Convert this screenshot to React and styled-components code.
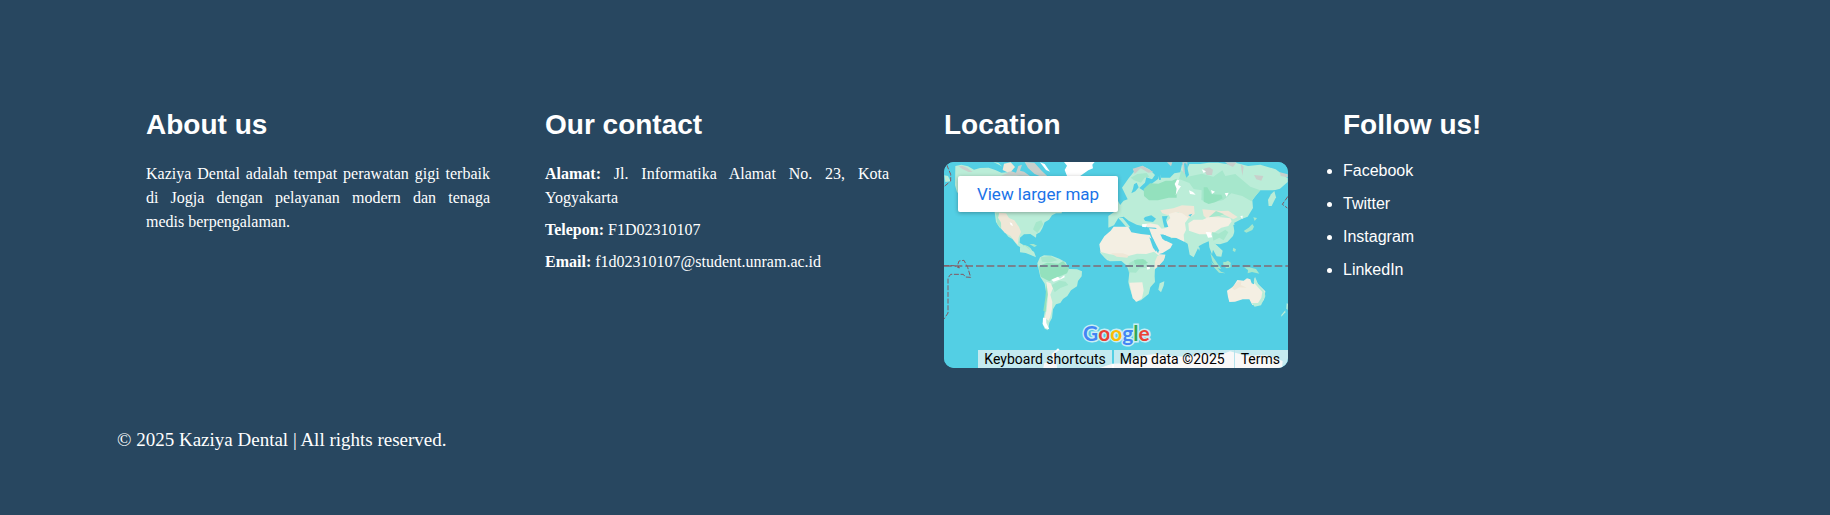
import React from "react";
import styled, { createGlobalStyle } from "styled-components";

const GlobalStyle = createGlobalStyle`
  *, *::before, *::after { box-sizing: border-box; }
  body { margin: 0; background: #284760; color: #fff; }
  h2, p, ul { margin: 0; padding: 0; }
`;

const Footer = styled.footer`
  min-height: 100vh;
  padding: 109px 117px 57px;
  background: #284760;
`;

const Columns = styled.div`
  display: grid;
  grid-template-columns: repeat(4, minmax(0, 1fr));
`;

const Column = styled.section`
  padding: 0 26px 0 29px;
`;

const Heading = styled.h2`
  margin-bottom: 21px;
  font: bold 28px/32px "Liberation Sans", Arial, sans-serif;
`;

const Text = styled.p`
  margin-bottom: 8px;
  font: 16px/24px "Liberation Serif", "Times New Roman", serif;
  text-align: justify;
`;

const LinkList = styled.ul`
  display: grid;
  gap: 15px;
  font: 16px/18px "Liberation Sans", Arial, sans-serif;
`;

const SocialLink = styled.a`
  color: #fff;
  text-decoration: none;
`;

const Copyright = styled.p`
  margin-top: 60px;
  font: 19px/24px "Liberation Serif", "Times New Roman", serif;
`;

const MapFrame = styled.div`
  position: relative;
  height: 206px;
  overflow: hidden;
  border-radius: 10px;
  background: #53cfe4;
  font-family: Roboto, sans-serif;
`;

const MapDrawing = styled.svg`
  display: block;
  width: 100%;
  height: 100%;
`;

const LargerMapLink = styled.a`
  position: absolute;
  top: 14px;
  left: 14px;
  width: 160px;
  border-radius: 2px;
  background: #fff;
  box-shadow: 0 1px 4px rgba(0, 0, 0, 0.3);
  color: #1a73e8;
  font-size: 17px;
  line-height: 36px;
  text-align: center;
  text-decoration: none;
`;

const MapLogo = styled.a`
  position: absolute;
  left: 139px;
  bottom: 22px;
  font: bold 21px/26px Lato, sans-serif;
  text-decoration: none;
  -webkit-text-stroke: 3px #c9eef5;
  paint-order: stroke fill;
`;

const Letter = styled.span`
  color: ${({ $color }) => $color};
`;

const Attribution = styled.div`
  position: absolute;
  right: 0;
  bottom: 0;
  display: flex;
`;

const attributionItem = `
  padding: 0 6px;
  border: 0;
  background: rgba(245, 245, 245, 0.7);
  color: #000;
  font: 14px/18px Roboto, sans-serif;
  text-decoration: none;
  white-space: nowrap;
`;

const ShortcutsButton = styled.button`
  ${attributionItem}
  margin-right: 2px;
`;

const MapData = styled.span`
  ${attributionItem}
  padding-right: 9px;
`;

const TermsLink = styled.a`
  ${attributionItem}
  padding-right: 8px;
  border-left: 1px solid #b5e3ec;
`;

const C = {
  land: "#bbedd8",
  green: "#a6e7cc",
  forest: "#93e1bd",
  sand: "#f4efe3",
  tan: "#efe7d7",
  rock: "#c9cfcb",
  ice: "#ffffff",
  sea: "#53cfe4",
};

const NORTH_AMERICA = [
  ["land", "M76 48 94 44 114 49 132 59 150 54 176 53 196 60 214 68 240 66 262 76 280 80 302 82 320 96 340 112 356 122 380 150 398 170 395 190 378 190 366 196 357 209 344 217 337 235 330 247 319 253 318 263 301 252 282 253 270 263 269 278 279 284 292 288 301 294 310 307 316 318 307 316 294 304 279 296 263 287 247 267 235 260 222 244 208 232 198 216 194 186 170 150 130 110 94 100 82 130 75 106Z"],
  ["rock", "M86 49 96 47 111 53 128 66 116 66 96 56Z"],
  ["rock", "M214 77 230 70 240 62 258 68 265 48 276 44 270 62 282 65 300 78Z"],
  ["rock", "M284 36 313 38 335 62 354 80 334 80 314 72 294 54Z"],
  ["ice", "M330 37 344 42 360 65 348 60Z"],
  ["land", "M190 36 206 39 217 50 208 45Z"],
  ["tan", "M222 41 242 37 255 51 244 64 232 67 218 60Z"],
  ["ice", "M402 36 494 36 487 44 489 55 475 61 459 72 443 83 412 80 404 60 411 47Z"],
  ["tan", "M207 188 228 190 237 204 253 211 267 231 273 246 266 262 263 284 253 272 241 257 224 248 214 236 213 217 204 203Z"],
  ["green", "M198 190 207 190 204 204 213 220 213 235 202 222Z"],
  ["green", "M279 285 294 289 302 300 314 318 299 305 280 296Z"],
  ["green", "M318 217 334 211 340 223 322 249 309 238Z"],
  ["ice", "M239 217 246 220 249 228 242 225Z"],
  ["land", "M348 192 370 186 367 194 353 198Z"],
  ["green", "M298 282 311 282 321 287 313 291Z"],
  ["land", "M43 76 54 78 62 94 46 96Z"],
];

const EURASIA = [
  ["land", "M36 113 56 85 76 60 97 47 118 58 135 75 126 88 109 82 105 98 88 114 101 122 129 98 145 86 149 70 153 83 180 83 193 70 211 67 216 43 230 60 238 42 270 42 296 38 324 38 354 43 376 38 414 48 451 44 497 58 533 85 533 96 510 116 496 120 488 121 451 121 437 137 427 151 429 174 413 200 395 207 372 219 378 231 369 258 352 276 330 283 317 282 296 274 279 281 267 288 251 322 239 314 233 281 216 271 200 262 184 265 174 253 150 248 143 236 126 226 100 229 80 224 56 212 41 200 25 204 12 226 -5 233 -5 198 22 179 32 163 41 152 53 148Z"],
  ["rock", "M68 56 97 47 130 66 115 68 92 55 74 72Z"],
  ["rock", "M217 37 232 37 231 80 220 79Z"],
  ["rock", "M281 56 298 52 309 59 306 75 290 75Z"],
  ["rock", "M345 37 380 37 369 51 356 45Z"],
  ["rock", "M392 42 401 50 397 77Z"],
  ["rock", "M432 75 460 78 454 92 439 88Z"],
  ["rock", "M510 67 533 73 533 82 512 78Z"],
  ["rock", "M171 37 187 37 183 49Z"],
  ["green", "M62 83 82 72 110 69 118 80 104 83 93 98 72 91Z"],
  ["green", "M214 60 233 80 276 71 310 80 337 61 346 78 376 72 421 110 451 121 437 137 424 154 397 138 364 130 340 150 299 159 274 150 275 121 251 117 238 99 207 87Z"],
  ["forest", "M101 117 120 100 145 101 167 92 186 92 200 86 200 143 176 143 144 151 117 151 102 138Z"],
  ["forest", "M281 112 292 112 304 133 334 134 338 145 315 157 296 162 281 155Z"],
  ["tan", "M151 181 190 175 216 166 252 168 254 192 237 204 220 202 205 187 172 195 157 190Z"],
  ["sand", "M97 223 121 220 144 224 155 236 171 233 165 221 181 204 175 192 197 186 217 190 236 204 225 219 228 240 221 254 223 275 199 264 181 262 153 251 137 233 113 232 100 228Z"],
  ["tan", "M277 178 310 181 333 183 355 182 368 191 383 201 370 208 343 194 318 203 291 206 281 197Z"],
  ["sand", "M235 220 251 209 278 209 296 201 333 202 361 205 365 214 355 228 334 233 315 246 301 253 268 253 237 242Z"],
  ["green", "M306 246 326 251 346 239 355 247 341 271 328 263 310 272Z"],
  ["green", "M296 202 318 183 343 193 330 198Z"],
  ["sand", "M117 235 148 238 169 273 188 282 181 295 158 309 145 313 136 286Z"],
  ["sea", "M118 261 128 263 147 301 143 314 131 296Z"],
  ["sea", "M151 253 166 256 177 268 166 273 157 266Z"],
  ["sea", "M156 199 173 198 168 211 175 231 163 232 159 215Z"],
  ["sea", "M105 201 124 196 138 206 129 216 106 213 101 206Z"],
  ["sea", "M222 40 229 40 237 75 229 83 225 70Z"],
  ["sea", "M72 103 80 98 86 112 76 124 64 130 69 116Z"],
  ["sea", "M147 69 151 69 153 89 147 90Z"],
  ["sea", "M370 225 382 220 390 239 374 248Z"],
  ["sea", "M235 195 247 191 241 200Z"],
  ["ice", "M201 89 208 91 204 105 213 109 205 120 197 136 200 116 194 102Z"],
  ["ice", "M275 58 288 64 281 69Z"],
  ["ice", "M303 120 315 125 306 132Z"],
  ["ice", "M344 130 356 128 350 140Z"],
  ["ice", "M237 121 249 126 257 134 240 132Z"],
  ["ice", "M287 246 302 247 307 262 294 263Z"],
  ["ice", "M391 198 398 197 397 208Z"],
  ["ice", "M97 222 111 223 107 232 96 230Z"],
  ["land", "M25 204 38 204 50 218 61 232 48 230 36 216Z"],
  ["land", "M296 270 311 277 326 291 338 302 334 320 320 319 309 299 306 313 298 292Z"],
  ["land", "M474 149 483 133 493 123 498 142 485 168 476 168Z"],
  ["green", "M401 243 416 233 427 222 432 230 427 240 409 248Z"],
  ["green", "M430 202 441 204 434 213Z"],
  ["green", "M340 339 354 332 363 339 354 354 343 349Z"],
  ["green", "M301 309 323 341 334 357 319 354 307 334Z"],
  ["green", "M370 293 378 298 375 306 368 302Z"],
  ["land", "M261 289 269 293 268 302Z"],
  ["land", "M5 154 18 142 27 158 36 175 17 180Z"],
];

const SOUTH = [
  ["land", "M52 100 60 82 72 76 95 77 118 86 137 97 147 117 171 118 186 124 185 139 174 153 171 169 153 181 142 198 129 207 121 219 108 223 99 238 96 264 88 278 84 301 74 296 68 282 75 240 79 191 74 161 61 141Z"],
  ["green", "M62 82 92 78 112 91 91 97 66 95Z"],
  ["forest", "M56 108 81 98 115 101 130 93 147 116 141 130 120 139 103 145 88 154 62 140Z"],
  ["forest", "M80 161 86 178 79 220 77 246 70 242 76 204Z"],
  ["sand", "M79 155 92 160 99 174 91 194 97 216 96 237 91 260 86 272 74 264 80 241 84 195Z"],
  ["green", "M95 165 119 152 137 155 145 165 121 174 104 187Z"],
  ["ice", "M94 149 114 140 120 146 133 136 134 142 122 148 101 155Z"],
  ["ice", "M69 263 78 264 79 279 88 298 76 295 68 282Z"],
  ["sand", "M238 43 253 19 272 2 281 -10 325 -10 334 7 363 12 390 15 398 37 412 67 418 73 436 74 431 91 412 112 385 113 354 111 316 90 262 91 242 70Z"],
  ["land", "M239 65 269 73 293 76 325 78 351 71 379 72 402 65 417 77 434 76 420 93 405 113 404 139 405 156 391 172 386 192 363 211 347 215 336 196 329 174 325 156 328 126 319 106 304 93 269 94 255 84Z"],
  ["tan", "M273 70 308 70 326 76 322 83 290 80Z"],
  ["green", "M326 100 352 86 377 89 384 113 359 115 348 128 326 127Z"],
  ["forest", "M342 91 369 87 384 98 366 106 345 103Z"],
  ["sand", "M328 158 367 157 371 181 366 205 350 215 338 205 333 181Z"],
  ["tan", "M412 78 436 74 432 89 414 109 403 119 405 94Z"],
  ["ice", "M379 107 388 105 390 116 382 119Z"],
  ["sea", "M388 22 397 28 412 57 408 65 399 53Z"],
  ["land", "M419 160 433 154 431 167 423 187 415 179Z"],
  ["land", "M0 52 15 47 31 61 42 65 48 82 34 76 17 69 0 67Z"],
];

const AUSTRALIA = [
  ["sand", "M351 92 369 80 382 60 401 62 411 55 421 58 425 70 432 73 434 53 443 71 466 94 462 119 450 133 427 135 418 118 398 118 375 125 358 126 354 111Z"],
  ["land", "M431 67 435 50 444 72 464 95 466 109 453 136 434 140 425 129 444 129 454 113 457 96 444 82Z"],
  ["tan", "M383 65 394 64 393 75 410 83 388 82 374 90 365 83Z"],
  ["green", "M402 22 418 22 438 27 448 41 426 36 413 40 414 30Z"],
  ["green", "M340 5 361 10 362 22 350 25 341 18Z"],
  ["green", "M303 5 323 25 333 35 347 40 327 38 312 22Z"],
  ["land", "M514 165 526 151 526 157 514 170Z"],
  ["land", "M530 130 534 131 533 150 529 146Z"],
];

const ANTARCTICA = [
  ["ice", "M365 282 384 265 389 270 376 278 379 294 381 324 340 324 343 308 367 308Z"],
  ["ice", "M509 324 546 311 590 310 630 288 674 282 735 289 766 290 827 280 868 286 900 274 948 287 1010 286 1058 303 1056 324Z"],
];

function Shapes({ shapes, x, y }) {
  return (
    <g transform={`translate(${x} ${y})`}>
      {shapes.map(([tone, d]) => (
        <path key={d} d={d} fill={C[tone]} />
      ))}
    </g>
  );
}

function WorldMap() {
  return (
    <MapDrawing viewBox="0 0 1032 618" preserveAspectRatio="xMidYMid slice" aria-hidden="true">
      <rect width="1032" height="618" fill={C.sea} />
      <Shapes shapes={NORTH_AMERICA} x={-42} y={-36} />
      <Shapes shapes={EURASIA} x={498} y={-36} />
      <Shapes shapes={SOUTH} x={228} y={204} />
      <Shapes shapes={AUSTRALIA} x={498} y={294} />
      <Shapes shapes={ANTARCTICA} x={-42} y={294} />
      <path d="M0 312H1032" stroke="#76838f" strokeWidth="6" strokeDasharray="23 9" />
      <g fill="none" stroke="#85575f" strokeWidth="3" strokeDasharray="15 5">
        <path d="M8 8 20 37 20 57 0 74" />
        <path d="M0 311H31L46 318 41 309 45 297 60 295 71 316 80 346 64 345 58 337H20L12 348V453L0 471" />
        <path d="M1032 103 1015 127 1030 138" />
      </g>
    </MapDrawing>
  );
}

const LOGO = [
  ["G", "#4285f4"],
  ["o", "#ea4335"],
  ["o", "#fbbc04"],
  ["g", "#4285f4"],
  ["l", "#34a853"],
  ["e", "#ea4335"],
];

const SOCIAL = ["Facebook", "Twitter", "Instagram", "LinkedIn"];

export default function App() {
  return (
    <>
      <GlobalStyle />
      <Footer>
        <Columns>
          <Column>
            <Heading>About us</Heading>
            <Text>
              Kaziya Dental adalah tempat perawatan gigi terbaik di Jogja dengan pelayanan modern dan
              tenaga medis&nbsp;berpengalaman.
            </Text>
          </Column>
          <Column>
            <Heading>Our contact</Heading>
            <Text>
              <strong>Alamat:</strong> Jl. Informatika Alamat No. 23, Kota Yogyakarta
            </Text>
            <Text>
              <strong>Telepon:</strong> F1D02310107
            </Text>
            <Text>
              <strong>Email:</strong> f1d02310107@student.unram.ac.id
            </Text>
          </Column>
          <Column>
            <Heading>Location</Heading>
            <MapFrame>
              <WorldMap />
              <LargerMapLink href="#map">View larger map</LargerMapLink>
              <MapLogo href="#google">
                {LOGO.map(([letter, color], i) => (
                  <Letter key={i} $color={color}>{letter}</Letter>
                ))}
              </MapLogo>
              <Attribution>
                <ShortcutsButton type="button">Keyboard shortcuts</ShortcutsButton>
                <MapData>Map data ©2025</MapData>
                <TermsLink href="#terms">Terms</TermsLink>
              </Attribution>
            </MapFrame>
          </Column>
          <Column>
            <Heading>Follow us!</Heading>
            <LinkList>
              {SOCIAL.map((name) => (
                <li key={name}>
                  <SocialLink href={`#${name.toLowerCase()}`}>{name}</SocialLink>
                </li>
              ))}
            </LinkList>
          </Column>
        </Columns>
        <Copyright>© 2025 Kaziya Dental | All rights reserved.</Copyright>
      </Footer>
    </>
  );
}
